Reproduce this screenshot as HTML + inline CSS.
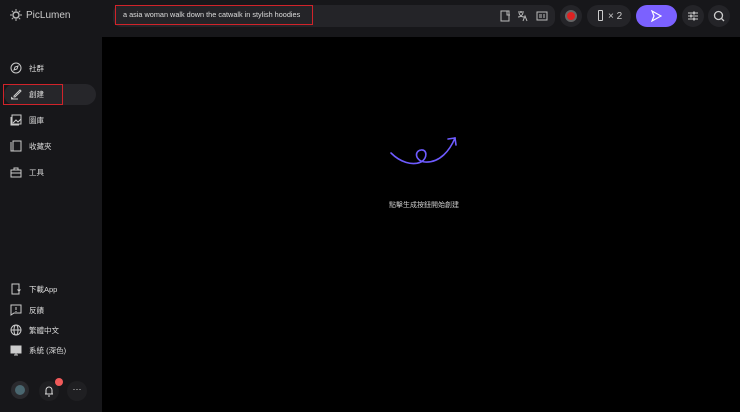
<!DOCTYPE html><html><head><meta charset="utf-8"><style>
*{margin:0;padding:0;box-sizing:border-box}
body{width:740px;height:412px;background:#17171a;font-family:"Liberation Sans","Noto Sans CJK TC",sans-serif;color:#ddd;position:relative;overflow:hidden;font-size:8px}
.main{position:absolute;left:102px;top:37px;right:0;bottom:0;background:#000}
.abs{position:absolute}
.nav{position:absolute;left:10px;display:flex;align-items:center;gap:7px;font-size:7.5px;color:#ddd}
.nav svg{width:12px;height:12px}
.pill{position:absolute;background:#242428;border-radius:12px}
</style></head><body>
<div class="abs" style="left:10px;top:9px;display:flex;align-items:center;gap:4px;font-size:10px;color:#ccc">
<svg width="12" height="12" viewBox="0 0 12 12"><circle cx="6" cy="6" r="3" fill="none" stroke="#bbb" stroke-width="1.4"/><g stroke="#bbb" stroke-width="1"><path d="M6 0v2M6 10v2M0 6h2M10 6h2M1.8 1.8l1.4 1.4M8.8 8.8l1.4 1.4M1.8 10.2l1.4-1.4M8.8 3.2l1.4-1.4"/></g></svg>PicLumen</div>
<div class="pill" style="left:113px;top:5px;width:442px;height:22px;border-radius:8px"></div>
<div class="abs" style="left:115px;top:5px;width:198px;height:20px;border:1.5px solid #d1232a"></div>
<div class="abs" style="left:123px;top:10px;font-size:7.3px;color:#ddd">a asia woman walk down the catwalk in stylish hoodies</div>
<svg class="abs" style="left:500px;top:10px" width="50" height="12" viewBox="0 0 50 12" fill="none" stroke="#bbb" stroke-width="1"><rect x="1" y="1" width="8" height="10"/><path d="M7 1v4h3"/><path d="M18 2h6M21 1v2M19 3c1 3 3 4 5 4M23 3c-1 3-3 4-5 4M23 11l2-5 2 5"/><rect x="37" y="2" width="10" height="8"/><path d="M39 5h3M39 7h3M44 4v4"/></svg>
<div class="pill" style="left:560px;top:5px;width:22px;height:22px;border-radius:11px"></div>
<div class="abs" style="left:565px;top:10px;width:12px;height:12px;border-radius:6px;background:#d22;border:2px solid #666"></div>
<div class="pill" style="left:587px;top:5px;width:44px;height:22px"></div>
<div class="abs" style="left:598px;top:10px;width:5px;height:11px;border:1px solid #ccc;border-radius:1px"></div>
<div class="abs" style="left:608px;top:11px;font-size:10px;color:#ccc">× 2</div>
<div class="abs" style="left:636px;top:5px;width:41px;height:22px;border-radius:11px;background:#7b61ff"></div>
<svg class="abs" style="left:651px;top:10px" width="11" height="12" viewBox="0 0 11 12" fill="none" stroke="#fff" stroke-width="1.2"><path d="M1 1l9 5-9 5 2-5z"/></svg>
<div class="pill" style="left:682px;top:5px;width:22px;height:22px;border-radius:11px"></div>
<svg class="abs" style="left:687px;top:10px" width="12" height="12" viewBox="0 0 12 12" stroke="#ccc" stroke-width="1"><path d="M1 3h10M1 6h10M1 9h10"/><path d="M7 1.5v3M4 4.5v3M7 7.5v3" stroke-width="1.5"/></svg>
<div class="pill" style="left:708px;top:5px;width:22px;height:22px;border-radius:11px"></div>
<svg class="abs" style="left:713px;top:10px" width="12" height="12" viewBox="0 0 12 12" fill="none" stroke="#ccc" stroke-width="1.3"><circle cx="5.5" cy="5.5" r="4"/><path d="M8.5 8.5l2.5 2.5"/></svg>
<div class="main"></div>
<div class="abs" style="left:4px;top:84px;width:92px;height:21px;border-radius:11px;background:#26262a"></div>
<div class="abs" style="left:3px;top:84px;width:60px;height:21px;border:1.5px solid #d1232a"></div>
<div class="nav" style="top:62px"><svg viewBox="0 0 12 12" fill="none" stroke="#ccc" stroke-width="1"><circle cx="6" cy="6" r="5"/><path d="M8 4L7 7 4 8 5 5z"/></svg>社群</div>
<div class="nav" style="top:88px"><svg viewBox="0 0 12 12" fill="none" stroke="#ccc" stroke-width="1"><path d="M4 8l6-6 1 1-6 6H4z"/><path d="M1 11h7M2 9c-1 1 0 2 1 1"/></svg>創建</div>
<div class="nav" style="top:114px"><svg viewBox="0 0 12 12" fill="none" stroke="#ccc" stroke-width="1"><rect x="2" y="1" width="9" height="9"/><path d="M1 3v8h8M3 9l3-3 2 2 3-3"/></svg>圖庫</div>
<div class="nav" style="top:140px"><svg viewBox="0 0 12 12" fill="none" stroke="#ccc" stroke-width="1"><rect x="3" y="1" width="8" height="10"/><path d="M1 2v9h2"/></svg>收藏夾</div>
<div class="nav" style="top:166px"><svg viewBox="0 0 12 12" fill="none" stroke="#ccc" stroke-width="1"><rect x="1" y="4" width="10" height="7"/><path d="M4 4V2h4v2M1 7h10"/></svg>工具</div>
<div class="nav" style="top:283px"><svg viewBox="0 0 12 12" fill="none" stroke="#ccc" stroke-width="1"><rect x="2" y="1" width="7" height="10"/><path d="M9 3v5M7.5 6.5L9 8l1.5-1.5"/></svg>下載App</div>
<div class="nav" style="top:304px"><svg viewBox="0 0 12 12" fill="none" stroke="#ccc" stroke-width="1"><path d="M1 1h10v8H4l-3 2z"/><path d="M6 3v3M6 7v1"/></svg>反饋</div>
<div class="nav" style="top:324px"><svg viewBox="0 0 12 12" fill="none" stroke="#ccc" stroke-width="1"><circle cx="6" cy="6" r="5"/><ellipse cx="6" cy="6" rx="2" ry="5"/><path d="M1 6h10"/></svg>繁體中文</div>
<div class="nav" style="top:344px"><svg viewBox="0 0 12 12" fill="none" stroke="#ccc" stroke-width="1"><rect x="1" y="2" width="10" height="7" fill="#ccc"/><path d="M4 11h4M6 9v2"/></svg>系統 (深色)</div>
<div class="abs" style="left:11px;top:381px;width:18px;height:18px;border-radius:9px;background:#2a2a2e"></div>
<div class="abs" style="left:15px;top:385px;width:10px;height:10px;border-radius:5px;background:#4a6770"></div>
<div class="abs" style="left:39px;top:381px;width:20px;height:20px;border-radius:10px;background:#1f1f22"></div>
<svg class="abs" style="left:43px;top:385px" width="12" height="12" viewBox="0 0 12 12" fill="none" stroke="#ddd" stroke-width="1"><path d="M3 9V5a3 3 0 016 0v4H2h8M5 11h2"/></svg>
<div class="abs" style="left:55px;top:378px;width:8px;height:8px;border-radius:4px;background:#f05a5a"></div>
<div class="abs" style="left:67px;top:381px;width:20px;height:20px;border-radius:10px;background:#1f1f22;color:#ddd;text-align:center;font-size:9px;line-height:16px">···</div>
<svg class="abs" style="left:385px;top:132px" width="80" height="40" viewBox="385 132 80 40" fill="none" stroke="#6e5bff" stroke-width="1.6" stroke-linecap="round"><path d="M391 153C400 162 412 166 421 162C428 158 427 149 421 150C414 151 415 161 425 162C440 163 450 150 455 138"/><path d="M448 139l7-1 1 7"/></svg>
<div class="abs" style="left:374px;top:200px;width:100px;text-align:center;font-size:7px;color:#ccc">點擊生成按鈕開始創建</div>
</body></html>
